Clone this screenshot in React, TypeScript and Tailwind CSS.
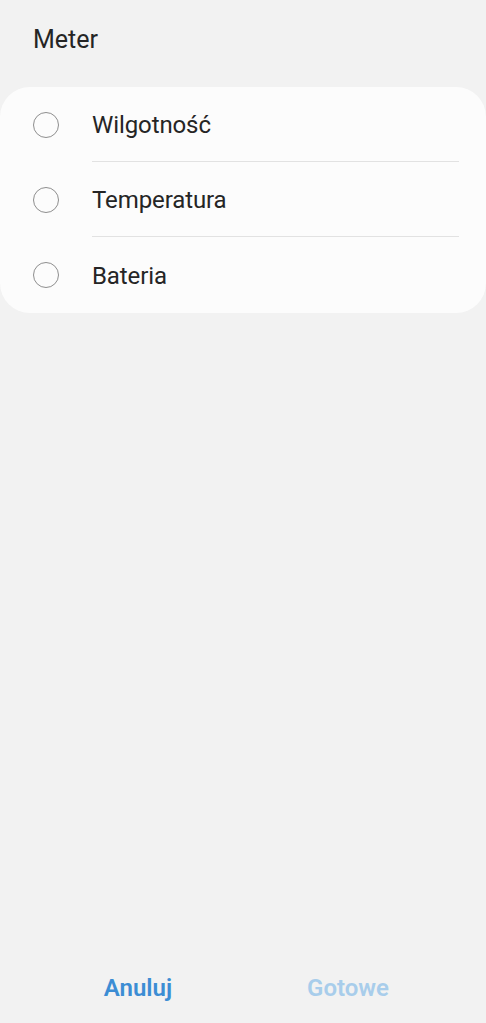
const items = ["Wilgotność", "Temperatura", "Bateria"];

export default function App() {
  return (
    <div
      className="h-[1023px] flex flex-col bg-[#f2f2f2] text-[#252525]"
      style={{ fontFamily: "Roboto, 'Noto Sans', sans-serif" }}
    >
      <div className="h-[87px] pl-[33px] pt-[24px] text-[25px] leading-[32px]">Meter</div>
      <div className="bg-[#fcfcfc] rounded-[30px]">
        {items.map((label, i) => (
          <div key={label} className="flex items-stretch h-[75px]">
            <div className="w-[92px] flex items-center justify-center pt-[1px]">
              <div className="w-[26px] h-[26px] rounded-full border-[1.5px] border-[#8e8e8e]" />
            </div>
            <div
              className={
                "flex-1 mr-[27px] flex items-center pt-[2px] text-[24px] tracking-[-0.1px] " +
                (i < items.length - 1 ? "border-b border-[#e2e2e2]" : "")
              }
            >
              {label}
            </div>
          </div>
        ))}
        <div className="h-[1px]" />
      </div>
      <div className="flex-1" />
      <div className="flex px-[33px] h-[72px] pt-[2px] items-center">
        <div className="flex-1 text-center text-[24px] font-semibold text-[#3c8dd4]">Anuluj</div>
        <div className="flex-1 text-center text-[24px] font-semibold text-[#a8cdeb]">Gotowe</div>
      </div>
    </div>
  );
}
